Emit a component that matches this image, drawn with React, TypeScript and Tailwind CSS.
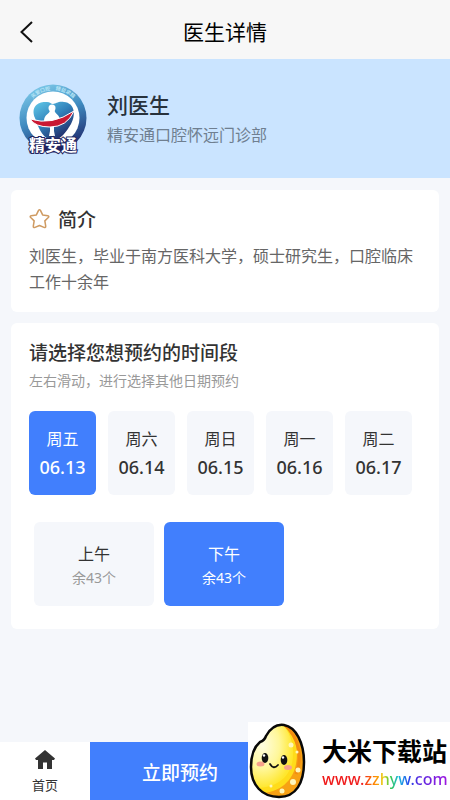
import { useState } from "react";

const dates = [
  { day: "周五", date: "06.13" },
  { day: "周六", date: "06.14" },
  { day: "周日", date: "06.15" },
  { day: "周一", date: "06.16" },
  { day: "周二", date: "06.17" },
];

const slots = [
  { name: "上午", left: "余43个" },
  { name: "下午", left: "余43个" },
];

function ClinicLogo() {
  return (
    <svg viewBox="0 0 68 74" className="h-[74px] w-[68px] shrink-0" role="img" aria-label="精安通">
      <defs>
        <linearGradient id="ring" x1="0.3" y1="0" x2="0.7" y2="1">
          <stop offset="0" stopColor="#7cc8e8" />
          <stop offset="0.45" stopColor="#3f8bc0" />
          <stop offset="1" stopColor="#1e2468" />
        </linearGradient>
        <linearGradient id="tooth" x1="0" y1="0" x2="0.7" y2="1">
          <stop offset="0" stopColor="#62cbea" />
          <stop offset="0.5" stopColor="#3182bb" />
          <stop offset="1" stopColor="#202562" />
        </linearGradient>
        <path id="arc" d="M6 36A28 28 0 0 1 62 36" />
      </defs>
      <circle cx="34" cy="36" r="33.500" fill="url(#ring)" />
      <circle cx="34" cy="36" r="26.500" fill="#fff" />
      <text fontSize="5" fontWeight="700" fill="#b5e4f5" fontFamily="Noto Sans CJK SC, sans-serif">
        <textPath href="#arc" startOffset="50%" textAnchor="middle">　关爱口腔　精益求精　</textPath>
      </text>
      <path d="M16 36C11 24 20 19 28 20C31 20 32 22 34 22C37 22 39 19 45 20C56 21 57 33 52 42C47 50 42 58 34 58C25 58 20 48 16 36Z" fill="url(#tooth)" />
      <circle cx="33" cy="26" r="3.500" fill="#fff" />
      <path d="M31 28H35.500C35.500 32 41 32 41 39H25C25 32 31 32 31 28Z" fill="#fff" />
      <path d="M31 44H35L35 49L36 54H30L31 49Z" fill="#fff" />
      <path d="M11 37Q33 44 55 29Q48 45 31 45Q16 45 11 37Z" fill="#c91832" stroke="#fff" strokeWidth="1" />
      <path d="M20 61H50L45 69Q34 72 24 69Z" fill="#202362" />
      <text x="34" y="68.500" textAnchor="middle" fontSize="16" fontWeight="700" fill="#fff" stroke="#242761" strokeWidth="2" paintOrder="stroke" fontFamily="Noto Sans CJK SC, sans-serif">精安通</text>
    </svg>
  );
}

function RiceMascot() {
  return (
    <svg viewBox="0 0 58 78" className="h-[78px] w-[58px] shrink-0" aria-hidden="true">
      <defs>
        <radialGradient id="rice" cx="0.35" cy="0.35" r="0.65">
          <stop offset="0" stopColor="#fffde0" />
          <stop offset="0.55" stopColor="#fff79a" />
          <stop offset="1" stopColor="#ffe72e" />
        </radialGradient>
        <clipPath id="grain">
          <path d="M18 14C23 5 29 2 36 3C48 5 56 21 56 40C56 61 48 75 31 75C14 75 3 63 3 45C3 34 6 25 12 20C15 19 17 17 18 14Z" />
        </clipPath>
      </defs>
      <g clipPath="url(#grain)">
        <rect width="58" height="78" fill="#f7a114" />
        <path d="M34 0C47 8 51 27 48 42C45 59 31 72 10 71L-2 55V0Z" fill="#ffdc1a" />
        <path d="M31 0C44 9 47 27 44 41C40 57 27 66 8 66L-2 50V0Z" fill="url(#rice)" />
        <path d="M36 2C51 16 55 36 48 52" fill="none" stroke="#f28c10" strokeWidth="3" />
        <g fill="#fff6bb">
          <circle cx="43" cy="23" r="2.500" /><circle cx="49" cy="30" r="1.500" />
          <circle cx="50" cy="48" r="2.500" /><circle cx="45" cy="60" r="3" />
          <circle cx="34" cy="69" r="2.500" /><circle cx="23" cy="64" r="1.500" />
        </g>
      </g>
      <path d="M18 14C23 5 29 2 36 3C48 5 56 21 56 40C56 61 48 75 31 75C14 75 3 63 3 45C3 34 6 25 12 20C15 19 17 17 18 14Z" fill="none" stroke="#080808" strokeWidth="2.500" />
      <ellipse cx="12.500" cy="42" rx="4" ry="2.500" fill="#f6a18b" />
      <ellipse cx="40" cy="45.500" rx="4" ry="2.500" fill="#f6a18b" />
      <ellipse cx="17" cy="36" rx="3.300" ry="5" fill="#111" />
      <ellipse cx="36" cy="38" rx="3.300" ry="5" fill="#111" />
      <circle cx="16" cy="33.500" r="1.200" fill="#fff" />
      <circle cx="35" cy="35.500" r="1.200" fill="#fff" />
      <path d="M22 42Q25.500 48 30 43" fill="none" stroke="#111" strokeWidth="1.800" strokeLinecap="round" />
    </svg>
  );
}

export default function App() {
  const [date, setDate] = useState(0);
  const [slot, setSlot] = useState(1);

  return (
    <div className="relative flex min-h-screen flex-col bg-[#f5f7fb] font-['Noto_Sans','Noto_Sans_CJK_SC',sans-serif] text-[#333]">
      <header className="grid h-[59px] grid-cols-[60px_1fr_60px] items-center bg-[#f7f7f7] pt-1">
        <button type="button" aria-label="返回" className="pl-5">
          <svg viewBox="0 0 13 22" className="h-[22px] w-[13px]" fill="none" stroke="#111" strokeWidth="2">
            <path d="M12 1L1.500 11L12 21" />
          </svg>
        </button>
        <h1 className="text-center text-[21px] leading-7 text-black">医生详情</h1>
      </header>

      <section className="flex h-[119px] items-center gap-5 bg-[#cae4ff] px-[19px]">
        <ClinicLogo />
        <div>
          <h2 className="text-[21px] leading-8 font-medium text-[#28323c]">刘医生</h2>
          <p className="text-base leading-7 text-[#6f7f90]">精安通口腔怀远门诊部</p>
        </div>
      </section>

      <main className="flex flex-1 flex-col gap-[11px] px-[11px] pt-3 pb-28">
        <section className="rounded-md bg-white px-[18px] pt-4 pb-[17px]">
          <div className="flex items-center gap-2">
            <svg viewBox="0 0 22 22" className="h-6 w-[21px] pb-0.5" fill="none" stroke="#cf9b62" strokeWidth="1.600" strokeLinejoin="round" aria-hidden="true">
              <path d="M10 2Q11 .5 12 2L14.300 6.700L19.700 7.500Q21.500 8 20.200 9.500L16.600 13L17.500 18.500Q17.500 20.500 15.700 19.800L11 17.800L6.300 19.800Q4.500 20.500 4.500 18.500L5.400 13L1.800 9.500Q.5 8 2.300 7.500L7.700 6.700Z" />
            </svg>
            <h2 className="text-[19px] leading-7 font-medium">简介</h2>
          </div>
          <p className="mt-[9px] text-base leading-[26px] text-[#666]">
            刘医生，毕业于南方医科大学，硕士研究生，口腔临床工作十余年
          </p>
        </section>

        <section className="rounded-md bg-white px-[18px] pt-4 pb-[23px]">
          <h2 className="text-[19px] leading-7 font-medium">请选择您想预约的时间段</h2>
          <p className="mt-1 text-sm leading-5 text-[#999]">左右滑动，进行选择其他日期预约</p>
          <div className="mt-5 flex gap-3 overflow-x-auto">
            {dates.map((d, i) => (
              <button
                key={d.date}
                type="button"
                aria-pressed={i === date}
                onClick={() => setDate(i)}
                className={`flex h-[84px] w-[67px] shrink-0 flex-col items-center justify-center rounded-md ${i === date ? "bg-[#417ffd] text-white" : "bg-[#f5f7fb] text-[#333]"}`}
              >
                <span className="text-base leading-7">{d.day}</span>
                <span className="text-lg leading-7 font-medium">{d.date}</span>
              </button>
            ))}
          </div>
          <div className="mt-[27px] flex gap-[10px] px-[5px]">
            {slots.map((s, i) => (
              <button
                key={s.name}
                type="button"
                aria-pressed={i === slot}
                onClick={() => setSlot(i)}
                className={`flex h-[84px] w-[120px] flex-col items-center justify-center rounded-md pt-1 ${i === slot ? "bg-[#417ffd] text-white" : "bg-[#f5f7fb] text-[#333]"}`}
              >
                <span className="text-base leading-6">{s.name}</span>
                <span className={`text-sm leading-6 ${i === slot ? "text-white" : "text-[#999]"}`}>{s.left}</span>
              </button>
            ))}
          </div>
        </section>
      </main>

      <footer className="fixed inset-x-0 bottom-0 flex h-[58px] bg-white">
        <a href="#home" className="flex w-1/5 flex-col items-center justify-center pt-1">
          <svg viewBox="0 0 20 19" className="h-[19px] w-5" fill="#333" aria-hidden="true">
            <path d="M10 0L20 8.500L19 10H17V19H12V12.500H8V19H3V10H1L0 8.500Z" />
          </svg>
          <span className="mt-1 text-[13px] leading-6">首页</span>
        </a>
        <button type="button" className="w-2/5 bg-[#417ffd] pt-1 text-[19px] leading-7 font-medium text-white">立即预约</button>
      </footer>

      <aside className="fixed right-0 bottom-0 flex h-[78px] w-[202px] items-center gap-4 bg-white">
        <RiceMascot />
        <div className="whitespace-nowrap pt-1">
          <p className="text-[25px] leading-8 font-bold text-black">大米下载站</p>
          <p className="bg-[linear-gradient(90deg,#ef1717_0%,#f02020_32%,#ff8a00_42%,#e8d21a_49%,#3bc943_54%,#17b8df_61%,#2547ed_69%,#5728df_77%,#a018e0_100%)] bg-clip-text text-base leading-6 font-medium text-transparent">www.zzhyw.com</p>
        </div>
      </aside>
    </div>
  );
}
